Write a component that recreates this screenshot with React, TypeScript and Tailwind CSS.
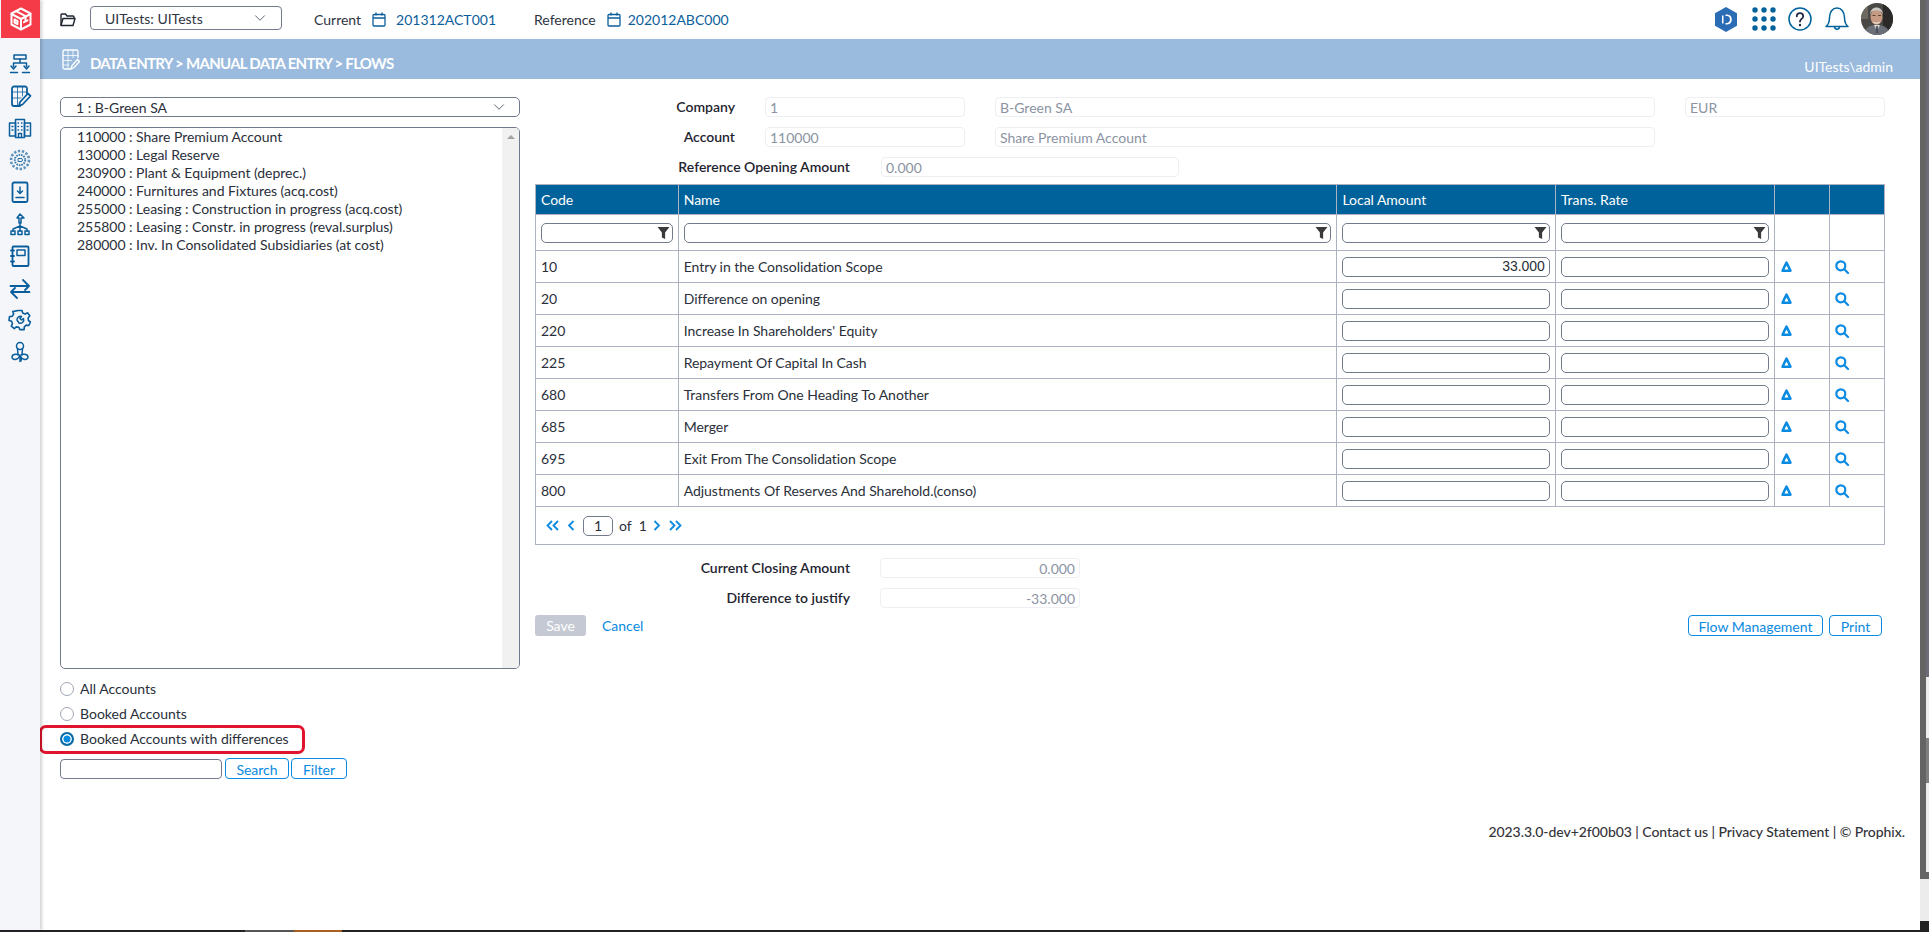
import { ChevronDown } from 'lucide-react';

const accounts = [
  '110000 : Share Premium Account',
  '130000 : Legal Reserve',
  '230900 : Plant & Equipment (deprec.)',
  '240000 : Furnitures and Fixtures (acq.cost)',
  '255000 : Leasing : Construction in progress (acq.cost)',
  '255800 : Leasing : Constr. in progress (reval.surplus)',
  '280000 : Inv. In Consolidated Subsidiaries (at cost)',
];

const flows = [
  { code: '10', name: 'Entry in the Consolidation Scope', amount: '33.000' },
  { code: '20', name: 'Difference on opening', amount: '' },
  { code: '220', name: "Increase In Shareholders' Equity", amount: '' },
  { code: '225', name: 'Repayment Of Capital In Cash', amount: '' },
  { code: '680', name: 'Transfers From One Heading To Another', amount: '' },
  { code: '685', name: 'Merger', amount: '' },
  { code: '695', name: 'Exit From The Consolidation Scope', amount: '' },
  { code: '800', name: 'Adjustments Of Reserves And Sharehold.(conso)', amount: '' },
];

function Logo() {
  return (
    <svg width="24" height="24" viewBox="0 0 24 24" fill="none" stroke="white" strokeWidth="2" strokeLinejoin="round" strokeLinecap="round">
      <path d="M12 1.5 21.5 6.5v11L12 22.5 2.5 17.5v-11z" />
      <path d="M2.5 7 12 12l9.5-5" />
      <path d="M12 12v10" />
      <path d="M7 4.2 16.5 9.2v4" />
      <path d="M5.5 12.5v3l3 1.6v-3z" />
      <path d="M15 15.2l3.5-1.8" />
    </svg>
  );
}

function NavIcon({ children }: { children: React.ReactNode }) {
  return (
    <div className="h-8 flex items-center justify-center">
      <svg width="24" height="24" viewBox="0 0 24 24" fill="none" stroke="#0b5e9c" strokeWidth="1.5" strokeLinejoin="round" strokeLinecap="round">
        {children}
      </svg>
    </div>
  );
}

function Sidebar() {
  return (
    <div className="w-10 shrink-0 bg-[#f5f6fa] shadow-[2px_0_3px_rgba(0,0,0,0.18)] z-10">
      <div className="h-[38px] ml-px bg-[#f43b47] flex items-center justify-center">
        <Logo />
      </div>
      <div className="pt-[10px] flex flex-col">
        <NavIcon>
          <rect x="6" y="3" width="12" height="4" />
          <path d="M12 7v4M5.5 11h13M5.5 11v3.5M18.5 11v3.5M3 14l2.5 3L8 14M16 14l2.5 3 2.5-3M2.5 20.5h7M14.5 20.5h7" />
        </NavIcon>
        <NavIcon>
          <path d="M19 10V4.5A2 2 0 0 0 17 2.5H6a2 2 0 0 0-2 2V20a2 2 0 0 0 2 2h6" strokeWidth="1.8" />
          <path d="M4 8h15M4 14h9M9.5 2.500V22M14.5 2.500V12" strokeWidth="0.8" />
          <path d="M11 22l1-4 8-8.500 2.500 2.500-8 8.500z" strokeWidth="1.8" />
        </NavIcon>
        <NavIcon>
          <rect x="7.5" y="3.5" width="9" height="18" />
          <rect x="1.5" y="7" width="6" height="13" />
          <rect x="16.5" y="7" width="6" height="13" />
          <path d="M10 7h.5M13.5 7h.5M10 10.5h.5M13.5 10.5h.5M10 14h.5M13.5 14h.5M4 10.5h1M4 14h1M19 10.5h1M19 14h1M10.5 21.5V17.5h3v4" strokeWidth="1.4" />
        </NavIcon>
        <NavIcon>
          <circle cx="12" cy="12" r="9" strokeDasharray="2.4 1.6" strokeWidth="2.6" stroke="#5f93bd" strokeLinecap="butt" />
          <circle cx="12" cy="12" r="5.2" strokeDasharray="1.6 0.9" strokeWidth="2" stroke="#3f7cae" strokeLinecap="butt" />
          <path d="M10.5 10.5h2.500a1.500 1.500 0 0 1 0 3h-2.500z" strokeWidth="0.9" />
        </NavIcon>
        <NavIcon>
          <rect x="4.5" y="2.5" width="15" height="19.5" rx="1.5" strokeWidth="1.8" />
          <path d="M12 7v6M9.5 11l2.500 2.500 2.500-2.500M8 17.5h8" />
        </NavIcon>
        <NavIcon>
          <path d="M12 2 9 6h2v5h2V6h3z" />
          <path d="M12 11v3M5 19v-2l7-3 7 3v2M12 14v5" />
          <rect x="3" y="19" width="4" height="3.5" />
          <rect x="10" y="19" width="4" height="3.5" />
          <rect x="17" y="19" width="4" height="3.5" />
        </NavIcon>
        <NavIcon>
          <rect x="4.5" y="2.5" width="16" height="19.5" rx="1" strokeWidth="1.8" />
          <rect x="9" y="6" width="8" height="5.5" />
          <path d="M3 6.5h3M3 12h3M3 17.5h3" strokeWidth="1.8" />
        </NavIcon>
        <NavIcon>
          <path d="M2.5 10h18.500l-6-6M21 10l-4 4M21.5 16H3l6 6M3 16l4-4" strokeWidth="1.8" />
        </NavIcon>
        <NavIcon>
          <path d="M10 2.500h4l.7 2.600 2.400 1 2.400-1.300 2.300 3-1.700 2.100.3 2.600 2 1.500-1.600 3.500-2.600-.4-1.900 1.800-.2 2.700h-4.200l-1-2.300-2.600-.4-2 1.700-3-2.500 1.200-2.400-.9-2.400-2.600-.8.5-3.900 2.700-.3 1.400-2.200-.8-2.500z" strokeWidth="1.6" />
          <path d="M9 12a3.500 3.500 0 0 1 4.500-3.500l-1.500 2 1.500 1.500 2-1.500a3.500 3.500 0 0 1-4.500 4.500z" />
        </NavIcon>
        <NavIcon>
          <circle cx="12" cy="6" r="3.5" />
          <path d="M9.5 8.500 10 15M14.500 8.500 14 15" />
          <path d="M12 15.500c-2-2-8-2-8 1.500s6 3.500 8-1.500c2 5 8 5 8 1.500s-6-3.500-8-1.500z" />
          <path d="M12 15.500v6c1.500 0 2-2.500 0-6z" />
        </NavIcon>
      </div>
    </div>
  );
}

function Avatar() {
  return (
    <svg width="32" height="32" viewBox="0 0 32 32" className="shrink-0">
      <defs>
        <clipPath id="avatar-clip"><circle cx="16" cy="16" r="16" /></clipPath>
      </defs>
      <g clipPath="url(#avatar-clip)">
        <rect width="32" height="32" fill="#4a4844" />
        <rect x="22" width="10" height="32" fill="#2b2a28" />
        <rect width="7" height="16" fill="#6c6a60" />
        <path d="M3 32c1-8 6-10 13-10s12 3 13 10z" fill="#6b7078" />
        <path d="M13 22l3 6 3-6z" fill="#d9d9d6" />
        <path d="M15.2 23h1.600l.5 7h-2.600z" fill="#4a5060" />
        <ellipse cx="15.5" cy="14" rx="6" ry="7.8" fill="#c79a84" />
        <path d="M9 12c0-5 3-7.500 6.500-7.500S22 7 22 12c-1-3-2-4.500-6.500-4.500S10 9 9 12z" fill="#c9c7c2" />
        <path d="M11.500 18.500c2 1.500 6 1.500 8 0-1 3-7 3-8 0z" fill="#f1ece6" />
        <path d="M11.500 12.500h3M17 12.500h3" stroke="#5f4236" strokeWidth="1" />
      </g>
    </svg>
  );
}

function CalendarIcon({ className }: { className: string }) {
  return (
    <svg width="14" height="15" viewBox="0 0 14 15" fill="none" stroke="#0b5e9c" strokeWidth="1.3" className={className}>
      <rect x="1" y="2.5" width="12" height="11.5" rx="1" />
      <path d="M1 6h12M4 0.500v3M10 0.500v3" />
    </svg>
  );
}

function TopBar() {
  return (
    <div className="h-[39px] flex items-center text-[14px] text-[#2f3542]">
      <svg width="16" height="14" viewBox="0 0 16 14" fill="none" stroke="#1f2430" strokeWidth="1.4" strokeLinejoin="round" className="ml-5 shrink-0">
        <path d="M1 12.500V2a1 1 0 0 1 1-1h3.500l1.500 2h6a1 1 0 0 1 1 1v1" />
        <path d="M1 12.500 3 5.500h12l-2 7z" />
      </svg>
      <div className="ml-3.5 w-[192px] h-6 -mt-[3px] border border-[#727a8c] rounded-[4px] flex items-center justify-between pl-[14px] pr-[12px]">
        <span>UITests: UITests</span>
        <ChevronDown size={18} strokeWidth={1.3} color="#5d6470" />
      </div>
      <span className="ml-8">Current</span>
      <CalendarIcon className="ml-[11px]" />
      <span className="ml-[10px] text-[#0b5e9c]">201312ACT001</span>
      <span className="ml-[38px]">Reference</span>
      <CalendarIcon className="ml-[11px]" />
      <span className="ml-[7px] text-[#0b5e9c]">202012ABC000</span>
      <div className="ml-auto mr-[27px] flex items-center -mt-[1px]">
        <svg width="22" height="25" viewBox="0 0 22 25">
          <path d="M11 0 22 6.250v12.500L11 25 0 18.750V6.250z" fill="#2a6db5" />
          <path d="M7 8.500h1.500v8H7zM10.500 7.500h1.800c6 0 6 10 0 10h-1.800v-1.600h1.600c3.800 0 3.800-6.800 0-6.800h-1.600z" fill="white" />
        </svg>
        <svg width="24" height="24" viewBox="0 0 24 24" fill="#00629b" className="ml-[15px]">
          <circle cx="3" cy="3" r="2.7" /><circle cx="12" cy="3" r="2.7" /><circle cx="21" cy="3" r="2.7" />
          <circle cx="3" cy="12" r="2.7" /><circle cx="12" cy="12" r="2.7" /><circle cx="21" cy="12" r="2.7" />
          <circle cx="3" cy="21" r="2.7" /><circle cx="12" cy="21" r="2.7" /><circle cx="21" cy="21" r="2.7" />
        </svg>
        <svg width="24" height="24" viewBox="0 0 24 24" fill="none" className="ml-3">
          <circle cx="12" cy="12" r="11" stroke="#00629b" strokeWidth="1.5" />
          <path d="M8.800 9.300c0-4.200 6.400-4.200 6.400 0 0 2.600-3.200 2.600-3.200 5.200" stroke="#1f2a44" strokeWidth="1.8" strokeLinecap="round" />
          <circle cx="12" cy="18" r="1.2" fill="#1f2a44" />
        </svg>
        <svg width="24" height="26" viewBox="0 0 24 26" fill="none" stroke="#00629b" strokeWidth="1.5" strokeLinejoin="round" className="ml-[13px]">
          <path d="M1 20.500c2.500-2 3.500-4 3.500-9C4.500 6 7.500 2 12 2s7.500 4 7.500 9.500c0 5 1 7 3.500 9z" />
          <path d="M9.500 20.500c0 3.500 5 3.500 5 0" />
        </svg>
        <div className="ml-3"><Avatar /></div>
      </div>
    </div>
  );
}

function PageBand() {
  return (
    <div className="h-10 bg-[#9abbde] flex items-center pl-[22px] pr-[27px] text-white">
      <svg width="18" height="21" viewBox="0 0 18 21" fill="none" stroke="white" strokeWidth="1.3" className="shrink-0">
        <path d="M16 9V2.500A1.500 1.500 0 0 0 14.500 1h-12A1.500 1.500 0 0 0 1 2.500v16A1.500 1.500 0 0 0 2.500 20H9" />
        <path d="M1 6.500h15M1 11.500h9M1 16h6M6 1v19M11 1v8" strokeWidth="0.8" />
        <path d="M9 20l1-3.500 5.500-6 2 2-5.500 6z" />
      </svg>
      <span className="ml-[10px] mt-2 text-[15px] font-bold tracking-[-0.72px]">DATA ENTRY &gt; MANUAL DATA ENTRY &gt; FLOWS</span>
      <span className="ml-auto mt-[14px] text-[14px]">UITests\admin</span>
    </div>
  );
}

function Radio({ label, checked }: { label: string; checked?: boolean }) {
  return (
    <div className="h-[25px] flex items-center text-[14px] text-[#2a2f3a]">
      {checked ? (
        <span className="w-[14px] h-[14px] rounded-full border-[2.5px] border-[#0a6ba5] bg-[#0a8ae0] shadow-[inset_0_0_0_1.5px_white]" />
      ) : (
        <span className="w-[14px] h-[14px] rounded-full border border-[#a0a6b4] bg-white" />
      )}
      <span className="ml-[6px]">{label}</span>
    </div>
  );
}

function AccountPanel() {
  return (
    <div className="w-[460px] shrink-0">
      <div className="h-5 border border-[#727a8c] rounded-[5px] flex items-center justify-between pl-[15px] pr-[11px] text-[14px] text-[#2a2f3a]">
        <span>1 : B-Green SA</span>
        <ChevronDown size={18} strokeWidth={1.3} color="#5d6470" />
      </div>
      <div className="mt-2.5 h-[542px] border border-[#727a8c] rounded-[5px] flex overflow-hidden text-[14px] text-[#2a2f3a] tracking-[-0.03px]">
        <div className="flex-1 pl-4 leading-[18px]">
          {accounts.map((a) => (
            <div key={a} className="h-[18px]">{a}</div>
          ))}
        </div>
        <div className="w-[17px] bg-[#f1f1f1] flex justify-center pt-[7px]">
          <span className="w-0 h-0 border-x-[4px] border-x-transparent border-b-[4px] border-b-[#a3a3a3]" />
        </div>
      </div>
      <div className="mt-[7px]">
        <Radio label="All Accounts" />
        <Radio label="Booked Accounts" />
        <div className="relative">
          <Radio label="Booked Accounts with differences" checked />
          <div className="absolute -left-[21px] top-[-1px] w-[266px] h-[29px] border-[3px] border-[#e0142c] rounded-[7px]" />
        </div>
      </div>
      <div className="mt-[7px] flex items-center text-[14px]">
        <div className="w-[162px] h-5 border border-[#727a8c] rounded-[4px]" />
        <button className="ml-[3px] w-[64px] h-[21px] border border-[#0a8ae0] rounded-[4px] text-[#0a8ae0]">Search</button>
        <button className="ml-[2px] w-[56px] h-[21px] border border-[#0a8ae0] rounded-[4px] text-[#0a8ae0]">Filter</button>
      </div>
    </div>
  );
}

function ReadOnly({ value, className }: { value: string; className: string }) {
  return (
    <div className={`h-5 border border-[#eeeff2] rounded-[4px] px-[4px] flex items-center text-[14px] text-[#8b93a3] ${className}`}>
      {value}
    </div>
  );
}

function FilterInput() {
  return (
    <div className="mx-[5px] h-5 border border-[#727a8c] rounded-[5px] flex items-center justify-end pr-[2px]">
      <svg width="13" height="13" viewBox="0 0 12 12" fill="#3a3a3a">
        <path d="M0.5 1h11L7.500 6v6l-3-1.500V6z" />
      </svg>
    </div>
  );
}

function CellInput({ value }: { value?: string }) {
  return (
    <div className="mx-[5px] h-5 border border-[#727a8c] rounded-[5px] flex items-center justify-end pr-[4px] text-[14px] text-[#2a2f3a] font-['Liberation_Sans',sans-serif]">
      {value}
    </div>
  );
}

function DeltaIcon() {
  return (
    <svg width="11" height="11" viewBox="0 0 11 11" fill="none" stroke="#0a8ae0" strokeWidth="2.5" strokeLinejoin="round" className="ml-[6px]">
      <path d="M5.500 1.500 9.500 9.700h-8z" />
    </svg>
  );
}

function SearchIcon() {
  return (
    <svg width="14" height="14" viewBox="0 0 14 14" fill="none" stroke="#0a8ae0" strokeWidth="2.2" strokeLinecap="round" className="ml-[5px]">
      <circle cx="5.8" cy="5.8" r="4.5" />
      <path d="M9.300 9.300 13 13" />
    </svg>
  );
}

function PagerChevrons({ double, left }: { double?: boolean; left?: boolean }) {
  return (
    <svg width={double ? 13 : 8} height="11" viewBox={double ? '0 0 13 11' : '0 0 8 11'} fill="none" stroke="#0a8ae0" strokeWidth="1.8" className="block">
      {left ? (
        <path d={double ? 'M6 1 1.500 5.500 6 10M12 1 7.500 5.500 12 10' : 'M6.500 1 2 5.500 6.500 10'} />
      ) : (
        <path d={double ? 'M1 1l4.500 4.500L1 10M7 1l4.500 4.500L7 10' : 'M1.500 1 6 5.500 1.500 10'} />
      )}
    </svg>
  );
}

function FlowTable() {
  const th = 'border border-[#adb2c2] font-normal text-left pl-[5px] text-white';
  const td = 'border border-[#adb2c2] p-0';
  return (
    <table className="w-[1349px] table-fixed border-collapse text-[14px] text-[#2a2f3a] tracking-[-0.04px]">
      <colgroup>
        <col className="w-[142.7px]" />
        <col className="w-[658.8px]" />
        <col className="w-[218.4px]" />
        <col className="w-[219.6px]" />
        <col className="w-[55px]" />
        <col className="w-[54.5px]" />
      </colgroup>
      <thead>
        <tr className="h-[30px] bg-[#00629b]">
          <th className={th}>Code</th>
          <th className={th}>Name</th>
          <th className={th}>Local Amount</th>
          <th className={th}>Trans. Rate</th>
          <th className={th}></th>
          <th className={th}></th>
        </tr>
        <tr className="h-9">
          <td className={td}><FilterInput /></td>
          <td className={td}><FilterInput /></td>
          <td className={td}><FilterInput /></td>
          <td className={td}><FilterInput /></td>
          <td className={td}></td>
          <td className={td}></td>
        </tr>
      </thead>
      <tbody>
        {flows.map((f) => (
          <tr key={f.code} className="h-8">
            <td className={`${td} pl-[5px]`}>{f.code}</td>
            <td className={`${td} pl-[5px]`}>{f.name}</td>
            <td className={td}><CellInput value={f.amount} /></td>
            <td className={td}><CellInput /></td>
            <td className={td}><DeltaIcon /></td>
            <td className={td}><SearchIcon /></td>
          </tr>
        ))}
      </tbody>
      <tfoot>
        <tr className="h-[38px]">
          <td colSpan={6} className={td}>
            <div className="flex items-center pl-[10px]">
              <PagerChevrons double left />
              <span className="ml-2"><PagerChevrons left /></span>
              <div className="ml-[8px] w-[30px] h-5 border border-[#727a8c] rounded-[5px] flex items-center justify-center">1</div>
              <span className="ml-[6px]">of</span>
              <span className="ml-[7px]">1</span>
              <span className="ml-[6px]"><PagerChevrons /></span>
              <span className="ml-[8px]"><PagerChevrons double /></span>
            </div>
          </td>
        </tr>
      </tfoot>
    </table>
  );
}

function FlowPanel() {
  const label = 'text-[14px] leading-5 font-semibold text-right text-[#1f2430]';
  return (
    <div className="ml-[15px] w-[1351px] shrink-0">
      <div className="flex flex-col gap-2.5">
        <div className="flex items-center">
          <span className={`w-[200px] ${label}`}>Company</span>
          <ReadOnly value="1" className="ml-[30px] w-[200px]" />
          <ReadOnly value="B-Green SA" className="ml-[30px] w-[660px]" />
          <ReadOnly value="EUR" className="ml-[30px] w-[200px]" />
        </div>
        <div className="flex items-center">
          <span className={`w-[200px] ${label}`}>Account</span>
          <ReadOnly value="110000" className="ml-[30px] w-[200px]" />
          <ReadOnly value="Share Premium Account" className="ml-[30px] w-[660px]" />
        </div>
        <div className="flex items-center">
          <span className={`w-[315px] ${label}`}>Reference Opening Amount</span>
          <ReadOnly value="0.000" className="ml-[31px] w-[298px]" />
        </div>
      </div>
      <div className="mt-[7px]">
        <FlowTable />
      </div>
      <div className="mt-[13px] flex flex-col gap-2.5">
        <div className="flex items-center">
          <span className={`w-[315px] ${label}`}>Current Closing Amount</span>
          <ReadOnly value="0.000" className="ml-[30px] w-[200px] justify-end" />
        </div>
        <div className="flex items-center">
          <span className={`w-[315px] ${label}`}>Difference to justify</span>
          <ReadOnly value="-33.000" className="ml-[30px] w-[200px] justify-end" />
        </div>
      </div>
      <div className="mt-[7px] flex items-center text-[14px]">
        <button className="w-[51px] h-[21px] bg-[#c5c9d3] rounded-[3px] text-white">Save</button>
        <span className="ml-4 text-[#0a8ae0]">Cancel</span>
        <button className="ml-auto w-[135px] h-[21px] border border-[#0a8ae0] rounded-[4px] text-[#0a8ae0]">Flow Management</button>
        <button className="ml-[6px] mr-[4px] w-[53px] h-[21px] border border-[#0a8ae0] rounded-[4px] text-[#0a8ae0]">Print</button>
      </div>
    </div>
  );
}

function WindowScrollbar() {
  return (
    <div className="w-[9px] shrink-0 flex flex-col">
      <div className="h-[879px] flex">
        <div className="w-1.5 bg-[#646464]" />
        <div className="w-[3px] flex flex-col">
          <div className="h-[677px] bg-[#6c6c78]" />
          <div className="h-[61px] bg-[#eeeeee]" />
          <div className="h-[45px] bg-[#808080]" />
          <div className="h-[89px] bg-[#eeeeee]" />
          <div className="h-[7px] bg-[#646464]" />
        </div>
      </div>
      <div className="h-[42px] bg-[#ececec]" />
      <div className="flex-1 bg-[#222222]" />
    </div>
  );
}

export default function App() {
  return (
    <div className="w-[1929px] h-[932px] overflow-hidden flex flex-col bg-white font-['Lato',sans-serif]">
      <div className="h-[930px] flex">
        <Sidebar />
        <div className="flex-1 min-w-0">
          <TopBar />
          <PageBand />
          <div className="pt-[18px] pl-5 flex">
            <AccountPanel />
            <FlowPanel />
          </div>
          <div className="mt-[42px] pr-[15px] text-right text-[14px] font-medium text-[#33343a] tracking-[-0.05px]">
            2023.3.0-dev+2f00b03 | Contact us | Privacy Statement | © Prophix.
          </div>
        </div>
        <WindowScrollbar />
      </div>
      <div className="flex-1 flex bg-[#222222]">
        <div className="ml-[245px] w-[49px] bg-[#555555]" />
        <div className="w-[48px] bg-[#a85f20]" />
      </div>
    </div>
  );
}
